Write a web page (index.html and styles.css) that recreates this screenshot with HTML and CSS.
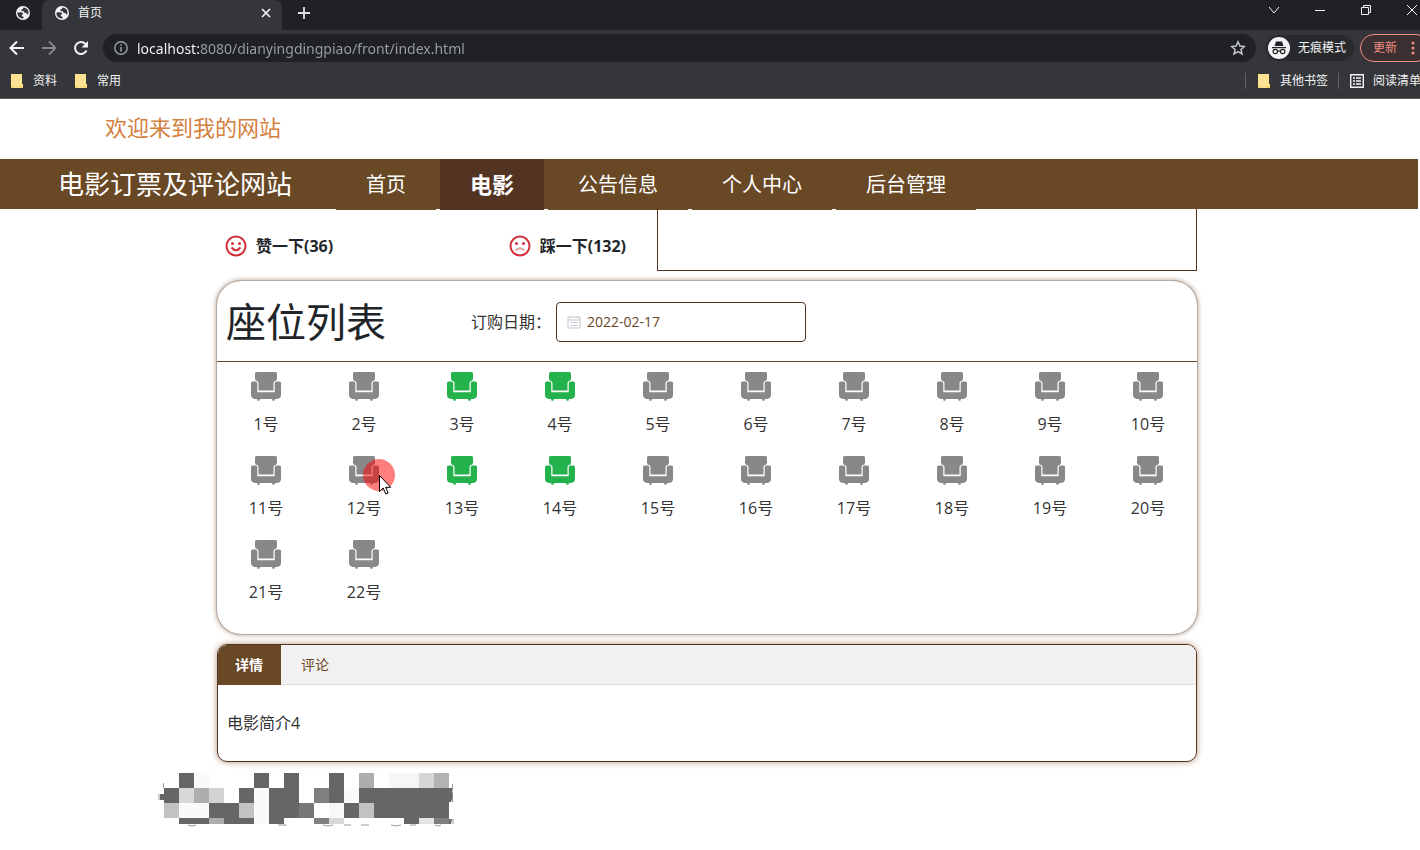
FILE: index.html
```html
<!DOCTYPE html>
<html lang="zh-CN">

<head>
    <meta charset="utf-8">
    <meta name="viewport" content="width=device-width, initial-scale=1.0">
    <title>首页</title>
    <link rel="stylesheet" href="styles.css">
</head>

<body>
    <svg class="symbols" aria-hidden="true">
        <symbol id="globe" viewBox="0 0 14 14">
            <circle cx="7" cy="7" r="7" fill="#f1f3f4" />
            <path d="M1.500 6.500L5 6.300Q7.500 6.500 7.200 8.200L5.800 8.600V10.200L7.500 10.800V12.400Q3 12.600 1.500 8.500ZM7.300 1.600L6.800 3 5.300 3.400 5.500 5 7.800 5.200 8.500 6.800 10.500 7 11 8.500 12.300 8.300Q13.200 3.500 9.500 2Z" fill="#35363a" />
        </symbol>
        <symbol id="folder" viewBox="0 0 14 16">
            <path d="M1 1h11v10h1v4H1z" fill="#fde293" />
            <path d="M1 13l3 2H1zM10 12l3 3h-3z" fill="#f5cf54" />
        </symbol>
        <symbol id="seat-icon" viewBox="0 0 30 29">
            <path d="M5.500 0h19Q26 0 26 1.500v5Q26 8.500 24.200 9q-1.700.5-1.700 2v7.500h-15V11q0-1.500-1.700-2Q4 8.500 4 6.500v-5Q4 0 5.500 0z" />
            <path d="M1.500 9.500h3q1.800 0 1.800 2v8.800h17.400v-8.800q0-2 1.800-2h3q1.500 0 1.500 1.500v12q0 3.500-4 4h-2l-.6 1.700h-1.800l-.6-1.700H9l-.6 1.700H6.600L6 27H4q-4-.5-4-4V11q0-1.500 1.500-1.500z" />
        </symbol>
    </svg>

    <header class="browser">
        <div class="tabs">
            <div class="tab pinned"><svg width="14" height="14"><use href="#globe" /></svg></div>
            <div class="tab active">
                <svg width="14" height="14"><use href="#globe" /></svg>
                <span>首页</span>
                <button aria-label="关闭"><svg width="10" height="10" viewBox="0 0 10 10"><path d="M1 1l8 8M9 1L1 9" stroke="#f1f3f4" stroke-width="1.700" /></svg></button>
            </div>
            <button class="new-tab" aria-label="新标签页"><svg width="12" height="12" viewBox="0 0 12 12"><path d="M6 0v12M0 6h12" stroke="#dfe1e5" stroke-width="1.800" /></svg></button>
            <div class="window">
                <button aria-label="搜索标签页"><svg width="12" height="12" viewBox="0 0 12 12"><path d="M1 3l5 6 5-6" /></svg></button>
                <button aria-label="最小化"><svg width="12" height="12" viewBox="0 0 12 12"><path d="M1 6.500h10" /></svg></button>
                <button aria-label="还原"><svg width="12" height="12" viewBox="0 0 12 12"><path d="M1.500 3.500h7v7h-7zM3.500 3.500v-2h7v7h-2" /></svg></button>
                <button aria-label="关闭窗口"><svg width="12" height="12" viewBox="0 0 12 12"><path d="M1 1l10 10M11 1L1 11" /></svg></button>
            </div>
        </div>

        <div class="toolbar">
            <button aria-label="后退"><svg width="16" height="16" viewBox="0 0 16 16"><path d="M15 8H2M8 1.500L1.500 8 8 14.500" fill="none" stroke="#f1f3f4" stroke-width="2" /></svg></button>
            <button aria-label="前进"><svg width="16" height="16" viewBox="0 0 16 16"><path d="M1 8h13M8 1.500L14.500 8 8 14.500" fill="none" stroke="#85868a" stroke-width="1.800" /></svg></button>
            <button aria-label="刷新"><svg width="16" height="16" viewBox="0 0 16 16"><path d="M13.500 10.500A6 6 0 1 1 12.500 4" fill="none" stroke="#f1f3f4" stroke-width="2" /><path d="M15 1v6.500H8.500z" fill="#f1f3f4" /></svg></button>
            <div class="address">
                <svg width="14" height="14" viewBox="0 0 14 14"><circle cx="7" cy="7" r="6.200" fill="none" stroke="#9aa0a6" stroke-width="1.400" /><path d="M7 6v4.500M7 3.300v1.500" stroke="#9aa0a6" stroke-width="1.500" /></svg>
                <input type="text" aria-label="地址" value="localhost:8080/dianyingdingpiao/front/index.html">
                <svg width="16" height="16" viewBox="0 0 16 16"><path d="M8 1.800l1.900 4.200 4.500.5-3.400 3 1 4.500L8 11.700 4 14l1-4.500-3.400-3 4.500-.5z" fill="none" stroke="#c4c7ca" stroke-width="1.500" /></svg>
            </div>
            <div class="incognito">
                <svg width="22" height="22" viewBox="0 0 22 22"><circle cx="11" cy="11" r="11" fill="#f1f3f4" /><path d="M8 4.500h6l1.500 4.500h-9zM4 10h14v1.200H4z" fill="#202124" /><g fill="none" stroke="#202124" stroke-width="1.200"><circle cx="7.300" cy="14.500" r="2.200" /><circle cx="14.700" cy="14.500" r="2.200" /><path d="M9.500 14.300q1.500-.8 3 0" /></g></svg>
                <span>无痕模式</span>
            </div>
            <button class="update">更新 <svg width="4" height="14" viewBox="0 0 4 14" fill="#f28b82"><circle cx="2" cy="2" r="1.500" /><circle cx="2" cy="7" r="1.500" /><circle cx="2" cy="12" r="1.500" /></svg></button>
        </div>

        <div class="bookmarks">
            <a href="#"><svg width="14" height="16"><use href="#folder" /></svg>资料</a>
            <a href="#"><svg width="14" height="16"><use href="#folder" /></svg>常用</a>
            <div class="other">
                <a href="#"><svg width="14" height="16"><use href="#folder" /></svg>其他书签</a>
                <a href="#"><svg width="14" height="14" viewBox="0 0 14 14"><path d="M.7.7h12.600v12.600H.7zM3 4h2M6 4h5M3 7h2M6 7h5M3 10h2M6 10h5" fill="none" stroke="#f1f3f4" stroke-width="1.400" /></svg>阅读清单</a>
            </div>
        </div>
    </header>

    <div class="page">
        <p class="welcome">欢迎来到我的网站</p>

        <nav>
            <h1>电影订票及评论网站</h1>
            <a href="#">首页</a>
            <a href="#" class="current">电影</a>
            <a href="#">公告信息</a>
            <a href="#">个人中心</a>
            <a href="#">后台管理</a>
        </nav>

        <main>
            <section class="movie">
                <div class="votes">
                    <button>
                        <svg width="22" height="22" viewBox="0 0 22 22"><circle cx="11" cy="11" r="9.500" /><path d="M6.500 12.500q4.500 5.500 9 0" /><g class="eyes"><circle cx="7.500" cy="8.500" r="1.500" /><circle cx="14.500" cy="8.500" r="1.500" /></g></svg>
                        赞一下(36)
                    </button>
                    <button>
                        <svg width="22" height="22" viewBox="0 0 22 22"><circle cx="11" cy="11" r="9.500" /><path class="frown" d="M6.500 15.500q4.500-4.500 9 0" /><g class="eyes"><circle cx="7.500" cy="8.500" r="1.500" /><circle cx="14.500" cy="8.500" r="1.500" /></g></svg>
                        踩一下(132)
                    </button>
                </div>
                <div class="info"></div>
            </section>

            <section class="seats">
                <header>
                    <h2>座位列表</h2>
                    <label for="date">订购日期：</label>
                    <div class="date">
                        <svg width="14" height="14" viewBox="0 0 14 14"><path d="M1 2h12v11H1zM1 5h12M3.500 1v2M10.500 1v2M3.500 7.500h7M3.500 10.500h7" fill="none" stroke="#c0c4cc" /></svg>
                        <input type="text" id="date" value="2022-02-17">
                    </div>
                </header>
                <div id="liste"></div>
            </section>

            <section class="detail">
                <div class="detail-tabs">
                    <button class="chosen">详情</button>
                    <button>评论</button>
                </div>
                <p>电影简介4</p>
            </section>
        </main>

        <svg class="mosaic" width="300" height="56" viewBox="0 0 300 56" aria-hidden="true"></svg>
    </div>

    <template id="seat">
        <button class="seat">
            <svg width="30" height="29"><use href="#seat-icon" /></svg>
            <span></span>
        </button>
    </template>

    <template id="pointer">
        <svg class="pointer" width="32" height="36" viewBox="0 0 32 36"><circle cx="16" cy="16" r="16" fill="#ff0000" fill-opacity=".5" /><path d="M16.500 16.500v16l3.700-3.500 2.600 6 2.400-1-2.500-5.700h5z" fill="#fff" stroke="#000" /></svg>
    </template>

    <script>
        const liste = document.querySelector("#liste");
        const skeleton = document.querySelector("#seat").content;
        const sold = [3, 4, 13, 14];

        // 22 seats, ten in a row
        for (let i = 1; i <= 22; i++) {
            const clone = skeleton.cloneNode(true);
            const seat = clone.querySelector(".seat");
            seat.querySelector("span").textContent = i + "号";
            if (sold.includes(i)) {
                seat.classList.add("sold");
            }
            if (i == 12) {
                seat.appendChild(document.querySelector("#pointer").content.cloneNode(true));
            }
            liste.appendChild(clone);
        }

        // pixelated footer: row, first column, number of columns, colour
        const blocks = [
            [0, 1, 1, "#666"], [0, 2, 1, "#fafafa"], [0, 6, 1, "#666"], [0, 8, 1, "#666"], [0, 11, 1, "#666"],
            [0, 13, 1, "#adadad"], [0, 15, 2, "#f6f6f6"], [0, 17, 1, "#d6d6d6"], [0, 18, 1, "#b3b3b3"],
            [1, 0, 1, "#666"], [1, 1, 1, "#d8d8d8"], [1, 2, 1, "#aeaeae"], [1, 3, 1, "#d3d3d3"], [1, 5, 1, "#666"],
            [1, 6, 1, "#fafafa"], [1, 7, 2, "#666"], [1, 10, 1, "#808080"], [1, 11, 1, "#666"], [1, 12, 1, "#fafafa"],
            [1, 13, 6, "#666"],
            [2, 0, 1, "#c2c2c2"], [2, 1, 2, "#fafafa"], [2, 3, 2, "#666"], [2, 5, 1, "#c2c2c2"], [2, 6, 1, "#fafafa"],
            [2, 7, 2, "#666"], [2, 9, 1, "#777"], [2, 11, 1, "#f8f8f8"], [2, 12, 1, "#666"], [2, 13, 1, "#c2c2c2"],
            [2, 14, 5, "#666"],
            [3, 1, 2, "#666"], [3, 3, 1, "#adadad"], [3, 4, 2, "#666"], [3, 6, 1, "#fafafa"], [3, 7, 1, "#666"],
            [3, 10, 1, "#808080"], [3, 11, 1, "#d8d8d8"], [3, 16, 1, "#666"], [3, 17, 1, "#e4e4e4"], [3, 18, 1, "#808080"]
        ];
        let drawing = "";
        blocks.forEach(([row, col, count, colour]) => {
            drawing += `<rect x="${col * 15 + 6}" y="${row * 15}" width="${count * 15}" height="${row == 3 ? 6 : 15}" fill="${colour}"/>`;
        });
        // leftovers of the letters round the edges
        drawing += `<path d="M291 15h3l1 8-2 6h-2zM291 46h3l-1 5h-2zM2 21h4v6H2z" fill="#666"/>
            <path d="M5.500 10v5M1 21v6M294.500 11v6M294.500 24v5M295 46v5M30 52q4 2 8 0M120 52h8M128 52v1M165 52q5 2 10 0M186 52h7M203 52h8M233 52q5 2 10 0M252 52h6M277 52q3 2 6 0" fill="none" stroke="#999"/>`;
        document.querySelector(".mosaic").innerHTML = drawing;
    </script>
</body>

</html>
```
FILE: styles.css
```css
* {
    box-sizing: border-box;
}

body {
    margin: 0;
    background-color: #fff;
    color: #212529;
    font-family: "Open Sans", "Noto Sans CJK SC", sans-serif;
    font-size: 16px;
    line-height: 24px;
}

h1,
h2,
p {
    margin: 0;
    font-weight: normal;
}

button,
input {
    padding: 0;
    border: none;
    background: none;
    color: inherit;
    font: inherit;
}

a {
    color: inherit;
    text-decoration: none;
}

svg {
    flex: none;
    display: block;
}

.symbols {
    position: absolute;
    width: 0;
    height: 0;
}

/* browser */
.browser {
    overflow: hidden;
    background-color: #35363a;
    border-bottom: 1px solid #5b5c60;
    color: #f1f3f4;
    font-size: 12px;
    line-height: 16px;
}

.tabs {
    display: flex;
    height: 30px;
    background-color: #202124;
}

.tab {
    display: flex;
    align-items: center;
    padding-bottom: 4px;
}

.pinned {
    width: 42px;
    padding-left: 16px;
    border-bottom-right-radius: 8px;
}

.active {
    width: 240px;
    gap: 9px;
    padding-left: 13px;
    padding-right: 11px;
    background-color: #35363a;
    border-radius: 8px 8px 0 0;
}

.active button {
    margin-left: auto;
}

.new-tab {
    margin-left: 16px;
    padding-bottom: 4px;
}

.window {
    display: flex;
    gap: 34px;
    margin-left: auto;
    margin-right: 2px;
    padding-bottom: 10px;
}

.window path {
    fill: none;
    stroke: #f1f3f4;
}

.toolbar {
    display: flex;
    align-items: center;
    height: 36px;
    margin-right: -10px;
    padding-left: 9px;
}

.toolbar > button {
    margin-right: 16px;
}

.address {
    flex: 1;
    display: flex;
    align-items: center;
    gap: 9px;
    height: 28px;
    margin-right: 10px;
    padding: 0 10px 0 11px;
    margin-left: -2px;
    border-radius: 14px;
    background-color: #202124;
}

.address input {
    flex: 1;
    height: 24px;
    outline: none;
    font-family: "Noto Sans", sans-serif;
    font-size: 14px;
    /* the host is brighter than the path */
    background: linear-gradient(to right, #fff 63px, #9aa0a6 63px);
    -webkit-background-clip: text;
    background-clip: text;
    -webkit-text-fill-color: transparent;
}

.incognito {
    display: flex;
    align-items: center;
    gap: 8px;
    height: 26px;
    margin-right: 6px;
    padding: 0 8px 0 2px;
    border-radius: 13px;
    background-color: #28292c;
}

.toolbar .update {
    display: flex;
    align-items: center;
    gap: 14px;
    width: 70px;
    height: 28px;
    margin-right: 0;
    padding-left: 12px;
    border: 1px solid #f28b82;
    border-radius: 14px;
    background-color: #3a3032;
    color: #f28b82;
}

.bookmarks {
    display: flex;
    align-items: center;
    gap: 17px;
    height: 32px;
    margin-right: -1px;
    padding-left: 10px;
    padding-bottom: 3px;
}

.bookmarks a {
    display: flex;
    align-items: center;
    gap: 9px;
}

.other {
    display: flex;
    margin-left: auto;
}

.other a {
    padding-left: 11px;
    border-left: 1px solid #5f6368;
}

.other a:first-child {
    padding-right: 10px;
}

/* website */
.page {
    padding-right: 2px;
}

.welcome {
    padding: 16px 105px 20px;
    color: #d4803f;
    font-size: 22px;
}

nav {
    display: flex;
    gap: 4px;
    height: 50px;
    padding-left: 58px;
    background-color: #694826;
    color: #fff;
    font-size: 20px;
    line-height: 51px;
}

nav h1 {
    margin-right: 40px;
    font-size: 26px;
}

nav a {
    height: 51px;
    padding: 0 30px;
    background-color: #694826;
}

nav .current {
    background-color: #533423;
    font-size: 22px;
    font-weight: bold;
}

main {
    width: 984px;
    max-width: 100%;
    margin: 0 auto;
    padding-right: 4px;
}

.movie {
    display: flex;
    height: 62px;
}

.votes {
    display: flex;
    flex: 1;
    justify-content: space-between;
    padding: 12px 31px 0 8px;
}

.votes button {
    display: flex;
    align-items: center;
    gap: 9px;
    font-weight: bold;
}

.votes svg {
    fill: none;
    stroke: #d3303c;
    stroke-width: 2;
}

.votes .frown {
    stroke: #f0a0a4;
}

.votes .eyes {
    fill: #d3303c;
    stroke: none;
}

.info {
    width: 540px;
    border: 1px solid #533423;
    border-top: none;
}

.seats {
    margin-top: 10px;
    padding-bottom: 20px;
    border-radius: 24px;
    box-shadow: 0 0 0 1px #b5aaa3, 0 0 5px 1px #b3a08f;
}

.seats header {
    display: flex;
    align-items: center;
    height: 81px;
    padding: 6px 9px 4px;
    border-bottom: 1px solid #694826;
}

.seats h2 {
    margin-right: 85px;
    font-size: 40px;
    line-height: 48px;
}

.seats label {
    color: #333;
}

.date {
    display: flex;
    align-items: center;
    gap: 6px;
    width: 250px;
    height: 40px;
    margin-left: 5px;
    padding: 0 10px;
    border: 1px solid #533423;
    border-radius: 4px;
}

.date input {
    width: 100%;
    color: #694826;
    font-size: 14px;
}

#liste {
    display: grid;
    grid-template-columns: repeat(10, 1fr);
}

.seat {
    position: relative;
    display: flex;
    flex-direction: column;
    align-items: center;
    gap: 11px;
    height: 84px;
    padding-top: 10px;
    color: #333;
}

.seat svg {
    fill: #888;
}

.sold svg {
    fill: #24b24c;
}

.seat .pointer {
    position: absolute;
    top: 13px;
    left: 48px;
}

.detail {
    overflow: hidden;
    margin-top: 10px;
    border: 1px solid #533423;
    border-radius: 10px;
    box-shadow: 0 0 6px #b3927a;
}

.detail-tabs {
    display: flex;
    height: 40px;
    background-color: #f2f1f1;
    border-bottom: 1px solid #e0dedc;
    color: #694826;
    font-size: 14px;
}

.detail-tabs button {
    height: 40px;
    padding: 0 20px;
}

.detail-tabs .chosen {
    padding: 0 18px 0 17px;
    background-color: #694826;
    color: #fff;
    font-weight: bold;
}

.detail p {
    padding: 26px 9px;
    color: #333;
}

.mosaic {
    margin: 11px 0 0 158px;
}
```
